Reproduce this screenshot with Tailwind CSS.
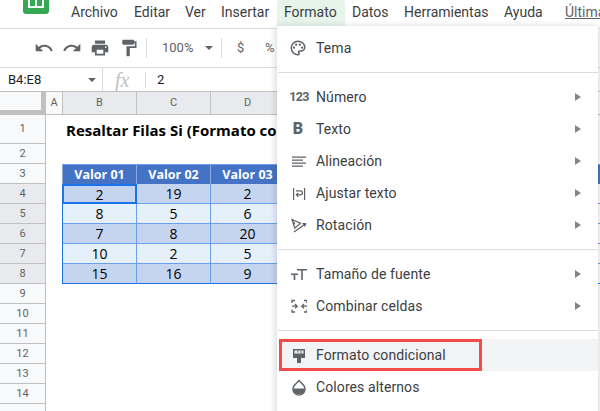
<!doctype html>
<html><head><meta charset="utf-8"><script src="https://cdn.jsdelivr.net/npm/@tailwindcss/browser@4"></script></head>
<body class="m-0 overflow-hidden bg-white">
<div class="relative w-[600px] h-[411px] overflow-hidden bg-white font-['Roboto',sans-serif] text-[#3c4043]">
  <!-- menu bar -->
  <div class="relative h-[29px] border-b border-[#dadce0] flex items-start text-[14px] leading-[24px]">
    <div class="absolute left-[23px] top-[-12px] w-[26px] h-[26px] rounded-[3px] bg-[#34a853] flex items-center justify-center">
      <div class="w-[16px] h-[14px] border-2 border-white grid grid-cols-2 gap-[2px] bg-white"><i class="bg-[#34a853]"></i><i class="bg-[#34a853]"></i></div>
    </div>
    <div class="ml-[71px] flex">
      <span class="w-[48px]">Archivo</span>
      <span class="ml-[15px] w-[36px]">Editar</span>
      <span class="ml-[15px] w-[21px]">Ver</span>
      <span class="ml-[15px] w-[48px]">Insertar</span>
      <span class="ml-[8px] w-[68px] h-[26px] pl-[7px] bg-[#e6f4ea] rounded-t-[3px]">Formato</span>
      <span class="ml-[7px] w-[37px]">Datos</span>
      <span class="ml-[15px] w-[85px]">Herramientas</span>
      <span class="ml-[15px] w-[39px]">Ayuda</span>
      <span class="ml-[22px] underline text-[#5f6368] whitespace-nowrap">Última</span>
    </div>
  </div>
  <!-- toolbar -->
  <div class="h-[39px] border-b border-[#dadce0] flex items-center text-[#5f6368]">
    <svg class="ml-[34px] w-[20px] h-[20px]" viewBox="0 0 24 24" fill="#5f6368"><path d="M12.5 8c-2.65 0-5.05.99-6.9 2.6L2 7v9h9l-3.62-3.62c1.39-1.16 3.16-1.88 5.12-1.88 3.54 0 6.55 2.31 7.6 5.5l2.37-.78C21.08 11.03 17.15 8 12.5 8z"/></svg>
    <svg class="ml-[8px] w-[20px] h-[20px]" viewBox="0 0 24 24" fill="#5f6368"><path d="M18.4 10.6C16.55 8.99 14.15 8 11.5 8c-4.65 0-8.58 3.03-9.96 7.22L3.9 16c1.05-3.19 4.05-5.5 7.6-5.5 1.95 0 3.73.72 5.12 1.88L13 16h9V7l-3.6 3.6z"/></svg>
    <svg class="ml-[8px] w-[20px] h-[20px]" viewBox="0 0 24 24" fill="#5f6368"><path d="M19 8H5c-1.66 0-3 1.34-3 3v6h4v4h12v-4h4v-6c0-1.66-1.34-3-3-3zm-3 11H8v-5h8v5zm3-7c-.55 0-1-.45-1-1s.45-1 1-1 1 .45 1 1-.45 1-1 1zm-1-9H6v4h12V3z"/></svg>
    <svg class="ml-[9px] w-[20px] h-[20px]" viewBox="0 0 24 24" fill="#5f6368"><path d="M18 4V3c0-.55-.45-1-1-1H5c-.55 0-1 .45-1 1v4c0 .55.45 1 1 1h12c.55 0 1-.45 1-1V6h1v4H9v11c0 .55.45 1 1 1h2c.55 0 1-.45 1-1v-9h8V4h-3z"/></svg>
    <div class="ml-[7px] w-px h-[20px] bg-[#dadce0]"></div>
    <span class="ml-[15px] w-[31px] text-[13px]">100%</span>
    <div class="ml-[12px] w-0 h-0 border-x-[4px] border-x-transparent border-t-[4px] border-t-[#5f6368]"></div>
    <div class="ml-[8px] w-px h-[20px] bg-[#dadce0]"></div>
    <span class="ml-[15px] w-[10px] text-[13px]">$</span>
    <span class="ml-[18px] w-[10px] text-[13px] overflow-hidden">%</span>
  </div>
  <!-- formula bar -->
  <div class="h-[24px] border-b border-[#c0c0c0] flex items-center text-[13px] text-[#202124]">
    <span class="ml-[8px] w-[80px]">B4:E8</span>
    <div class="w-0 h-0 border-x-[4px] border-x-transparent border-t-[4px] border-t-[#5f6368]"></div>
    <div class="ml-[6px] w-px h-[23px] bg-[#dadce0]"></div>
    <span class="ml-[12px] w-[30px] font-['Liberation_Serif',serif] italic text-[20px] text-[#bdc1c6]">fx</span>
    <div class="w-px h-[16px] bg-[#dadce0]"></div>
    <span class="ml-[11px]">2</span>
  </div>
  <!-- column header -->
  <div class="h-[23px] flex border-b border-[#c0c0c0] text-[11px] leading-[22px] text-[#5f6368] text-center">
    <div class="w-[46px] bg-[#f8f9fa] border-r-[5px] border-b-[4px] border-[#c0c0c0]"></div>
    <div class="w-[17px] bg-[#f8f9fa] border-r border-[#c0c0c0]">A</div>
    <div class="w-[74px] bg-[#e8eaed] border-r border-[#c0c0c0]">B</div>
    <div class="w-[74px] bg-[#e8eaed] border-r border-[#c0c0c0]">C</div>
    <div class="w-[74px] bg-[#e8eaed] border-r border-[#c0c0c0]">D</div>
  </div>
  <!-- sheet rows -->
  <div class="font-['Open_Sans',sans-serif] text-[14px] text-black">
    <div class="flex h-[29px]">
      <div class="w-[46px] bg-[#f8f9fa] border-r border-b border-[#c0c0c0] font-['Roboto',sans-serif] text-[11px] text-[#5f6368] text-center leading-[28px]">1</div>
      <div class="ml-[20px] font-bold text-[15px] leading-[31px] whitespace-nowrap">Resaltar Filas Si (Formato co</div>
    </div>
    <div class="flex h-[20px]"><div class="w-[46px] bg-[#f8f9fa] border-r border-b border-[#c0c0c0] font-['Roboto',sans-serif] text-[11px] text-[#5f6368] text-center leading-[19px]">2</div></div>
    <div class="flex h-[20px] text-center leading-[20px]">
      <div class="w-[46px] bg-[#f8f9fa] border-r border-b border-[#c0c0c0] font-['Roboto',sans-serif] text-[11px] text-[#5f6368] leading-[19px]">3</div>
      <div class="w-[16px]"></div>
      <div class="flex flex-1 font-bold text-white text-[12.5px] bg-[#4472c4] border-t border-[#6d9eeb]">
        <div class="w-[75px] border-l border-r border-[#8ea9db]">Valor 01</div>
        <div class="w-[74px] border-r border-[#8ea9db]">Valor 02</div>
        <div class="w-[74px] border-r border-[#8ea9db]">Valor 03</div>
      </div>
    </div>
    <div class="flex h-[20px] text-center leading-[20px]">
      <div class="w-[46px] bg-[#e8eaed] border-r border-b border-[#c0c0c0] font-['Roboto',sans-serif] text-[11px] text-[#5f6368] leading-[19px]">4</div>
      <div class="w-[16px]"></div>
      <div class="w-[75px] h-[20px] bg-[#c5d5f0] border-2 border-[#1a73e8] leading-[17px]">2</div>
      <div class="w-[74px] bg-[#c5d5f0] border-r border-b border-[#6d9eeb]">19</div>
      <div class="w-[74px] bg-[#c5d5f0] border-r border-b border-[#6d9eeb]">2</div>
      <div class="flex-1 border-b border-[#6d9eeb]"></div>
    </div>
    <div class="flex h-[20px] text-center leading-[20px]">
      <div class="w-[46px] bg-[#e8eaed] border-r border-b border-[#c0c0c0] font-['Roboto',sans-serif] text-[11px] text-[#5f6368] leading-[19px]">5</div>
      <div class="w-[16px]"></div>
      <div class="w-[75px] bg-[#e6f0fb] border-x border-b border-l-[#1a73e8] border-[#6d9eeb]">8</div>
      <div class="w-[74px] bg-[#e6f0fb] border-r border-b border-[#6d9eeb]">5</div>
      <div class="w-[74px] bg-[#e6f0fb] border-r border-b border-[#6d9eeb]">6</div>
      <div class="flex-1 border-b border-[#6d9eeb]"></div>
    </div>
    <div class="flex h-[20px] text-center leading-[20px]">
      <div class="w-[46px] bg-[#e8eaed] border-r border-b border-[#c0c0c0] font-['Roboto',sans-serif] text-[11px] text-[#5f6368] leading-[19px]">6</div>
      <div class="w-[16px]"></div>
      <div class="w-[75px] bg-[#c5d5f0] border-x border-b border-l-[#1a73e8] border-[#6d9eeb]">7</div>
      <div class="w-[74px] bg-[#c5d5f0] border-r border-b border-[#6d9eeb]">8</div>
      <div class="w-[74px] bg-[#c5d5f0] border-r border-b border-[#6d9eeb]">20</div>
      <div class="flex-1 border-b border-[#6d9eeb]"></div>
    </div>
    <div class="flex h-[20px] text-center leading-[20px]">
      <div class="w-[46px] bg-[#e8eaed] border-r border-b border-[#c0c0c0] font-['Roboto',sans-serif] text-[11px] text-[#5f6368] leading-[19px]">7</div>
      <div class="w-[16px]"></div>
      <div class="w-[75px] bg-[#e6f0fb] border-x border-b border-l-[#1a73e8] border-[#6d9eeb]">10</div>
      <div class="w-[74px] bg-[#e6f0fb] border-r border-b border-[#6d9eeb]">2</div>
      <div class="w-[74px] bg-[#e6f0fb] border-r border-b border-[#6d9eeb]">5</div>
      <div class="flex-1 border-b border-[#6d9eeb]"></div>
    </div>
    <div class="flex h-[20px] text-center leading-[20px]">
      <div class="w-[46px] bg-[#e8eaed] border-r border-b border-[#c0c0c0] font-['Roboto',sans-serif] text-[11px] text-[#5f6368] leading-[19px]">8</div>
      <div class="w-[16px]"></div>
      <div class="w-[75px] bg-[#c5d5f0] border-x border-b border-l-[#1a73e8] border-b-[#1a73e8] border-r-[#6d9eeb]">15</div>
      <div class="w-[74px] bg-[#c5d5f0] border-r border-b border-r-[#6d9eeb] border-b-[#1a73e8]">16</div>
      <div class="w-[74px] bg-[#c5d5f0] border-r border-b border-r-[#6d9eeb] border-b-[#1a73e8]">9</div>
      <div class="flex-1 border-b border-b-[#1a73e8]"></div>
    </div>
    <div class="h-[131px] overflow-hidden font-['Roboto',sans-serif] text-[11px] text-[#5f6368] text-center leading-[19px]">
      <div class="w-[46px] h-[20px] bg-[#f8f9fa] border-r border-b border-[#c0c0c0]">9</div>
      <div class="w-[46px] h-[20px] bg-[#f8f9fa] border-r border-b border-[#c0c0c0]">10</div>
      <div class="w-[46px] h-[20px] bg-[#f8f9fa] border-r border-b border-[#c0c0c0]">11</div>
      <div class="w-[46px] h-[20px] bg-[#f8f9fa] border-r border-b border-[#c0c0c0]">12</div>
      <div class="w-[46px] h-[20px] bg-[#f8f9fa] border-r border-b border-[#c0c0c0]">13</div>
      <div class="w-[46px] h-[20px] bg-[#f8f9fa] border-r border-b border-[#c0c0c0]">14</div>
      <div class="w-[46px] h-[11px] bg-[#f8f9fa] border-r border-[#c0c0c0]"></div>
    </div>
  </div>
  <!-- Format menu -->
  <div class="absolute left-[277px] top-[26px] w-[321px] h-[400px] bg-white rounded-[3px] shadow-[0_2px_6px_2px_rgba(60,64,67,0.18)] pt-[6px] text-[14px] tracking-[0.1px] text-[#3c4043]">
    <div class="h-[32px] flex items-center">
      <svg class="ml-[12px] w-[18px] h-[18px]" viewBox="0 0 24 24" fill="none" stroke="#5f6368" stroke-width="2"><path d="M12 3a9 9 0 0 0 0 18c.83 0 1.5-.67 1.5-1.5 0-.39-.15-.74-.39-1.01-.23-.26-.38-.61-.38-.99 0-.83.67-1.5 1.5-1.5H16c2.76 0 5-2.24 5-5 0-4.42-4.03-8-9-8z"/><g fill="#5f6368" stroke="none"><circle cx="6.5" cy="11.5" r="1.5"/><circle cx="9.5" cy="7.5" r="1.5"/><circle cx="14.5" cy="7.5" r="1.5"/><circle cx="17.5" cy="11.5" r="1.5"/></g></svg>
      <span class="ml-[9px]">Tema</span>
    </div>
    <div class="h-[17px] flex items-center"><div class="ml-px w-[320px] h-px bg-[#dadce0]"></div></div>
    <div class="h-[32px] flex items-center">
      <span class="ml-[12px] w-[20px] text-center text-[12.5px] font-bold tracking-[-0.6px] text-[#5f6368]">123</span>
      <span class="ml-[7px]">Número</span>
      <div class="ml-auto mr-[17px] w-0 h-0 border-y-[4px] border-y-transparent border-l-[6px] border-l-[#80868b]"></div>
    </div>
    <div class="h-[32px] flex items-center">
      <span class="ml-[12px] w-[18px] text-center text-[16px] font-black text-[#5f6368]">B</span>
      <span class="ml-[9px]">Texto</span>
      <div class="ml-auto mr-[17px] w-0 h-0 border-y-[4px] border-y-transparent border-l-[6px] border-l-[#80868b]"></div>
    </div>
    <div class="h-[32px] flex items-center">
      <svg class="ml-[12px] w-[18px] h-[18px]" viewBox="0 0 18 18" fill="#5f6368"><path d="M3 4.5h14v1.2H3zM3 7.5h11v1.2H3zM3 10.5h14v1.2H3zM3 13.5h11v1.2H3z"/></svg>
      <span class="ml-[9px]">Alineación</span>
      <div class="ml-auto mr-[17px] w-0 h-0 border-y-[4px] border-y-transparent border-l-[6px] border-l-[#80868b]"></div>
    </div>
    <div class="h-[32px] flex items-center">
      <svg class="ml-[12px] w-[18px] h-[18px]" viewBox="0 0 18 18" fill="none" stroke="#5f6368" stroke-width="1.2"><path d="M4.6 4v12M15.6 4v12M7 6.8h4.5a2 2 0 0 1 0 4H7.5M9.3 8.8l-2 2 2 2"/></svg>
      <span class="ml-[9px]">Ajustar texto</span>
      <div class="ml-auto mr-[17px] w-0 h-0 border-y-[4px] border-y-transparent border-l-[6px] border-l-[#80868b]"></div>
    </div>
    <div class="h-[32px] flex items-center">
      <svg class="ml-[12px] w-[18px] h-[18px]" viewBox="0 0 18 18" fill="none" stroke="#5f6368" stroke-width="1.2"><path d="M3 3.5l8.5 3.6-5.8 5.2zM5.7 8.2l-1-2.6M5 16l12-8.5M17 7.5l-3.5.2M17 7.5l-1.6 3"/></svg>
      <span class="ml-[9px]">Rotación</span>
      <div class="ml-auto mr-[17px] w-0 h-0 border-y-[4px] border-y-transparent border-l-[6px] border-l-[#80868b]"></div>
    </div>
    <div class="h-[17px] flex items-center"><div class="ml-px w-[320px] h-px bg-[#dadce0]"></div></div>
    <div class="h-[32px] flex items-center">
      <svg class="ml-[12px] w-[18px] h-[18px]" viewBox="0 0 18 18" fill="#5f6368"><path d="M8 4h10v1.6h-4.2V15h-1.6V5.6H8zM2 8.5h7V10H6.3v5H4.7v-5H2z"/></svg>
      <span class="ml-[9px]">Tamaño de fuente</span>
      <div class="ml-auto mr-[17px] w-0 h-0 border-y-[4px] border-y-transparent border-l-[6px] border-l-[#80868b]"></div>
    </div>
    <div class="h-[32px] flex items-center">
      <svg class="ml-[12px] w-[18px] h-[18px]" viewBox="0 0 18 18" fill="none" stroke="#5f6368" stroke-width="1.3"><path d="M3 6V3.5h3M15 3.5h3V6M3 12.5V15h3M15 15h3v-2.5M3 9.2h5M6 7l2.2 2.2L6 11.4M18 9.2h-5M15 7l-2.2 2.2 2.2 2.2"/></svg>
      <span class="ml-[9px]">Combinar celdas</span>
      <div class="ml-auto mr-[17px] w-0 h-0 border-y-[4px] border-y-transparent border-l-[6px] border-l-[#80868b]"></div>
    </div>
    <div class="h-[17px] flex items-center"><div class="ml-px w-[320px] h-px bg-[#dadce0]"></div></div>
    <div class="relative h-[32px] ml-[2px] bg-[#f1f3f4] flex items-center">
      <svg class="ml-[10px] w-[18px] h-[18px]" viewBox="0 0 18 18" fill="#5f6368"><path d="M4 3h12v9h-4v5H8v-5H4z"/><path d="M5.5 4.5h9v3h-9z" fill="#f1f3f4"/><path d="M8.5 4.5h1v2h-1zM11.5 4.5h1v3h-1z"/></svg>
      <span class="ml-[9px]">Formato condicional</span>
      <div class="absolute left-0 top-0 w-[203px] h-[32px] border-[3px] border-[#f44a4a]"></div>
    </div>
    <div class="h-[32px] flex items-center">
      <svg class="ml-[12px] w-[18px] h-[18px]" viewBox="0 0 18 18"><path d="M10 2.5L5.2 7.5a6 6 0 1 0 9.6 0z" fill="none" stroke="#5f6368" stroke-width="1.5"/><path d="M4 10.5h12a6 6 0 0 1-12 0z" fill="#5f6368"/></svg>
      <span class="ml-[9px]">Colores alternos</span>
    </div>
  </div>
</div>
</body></html>
